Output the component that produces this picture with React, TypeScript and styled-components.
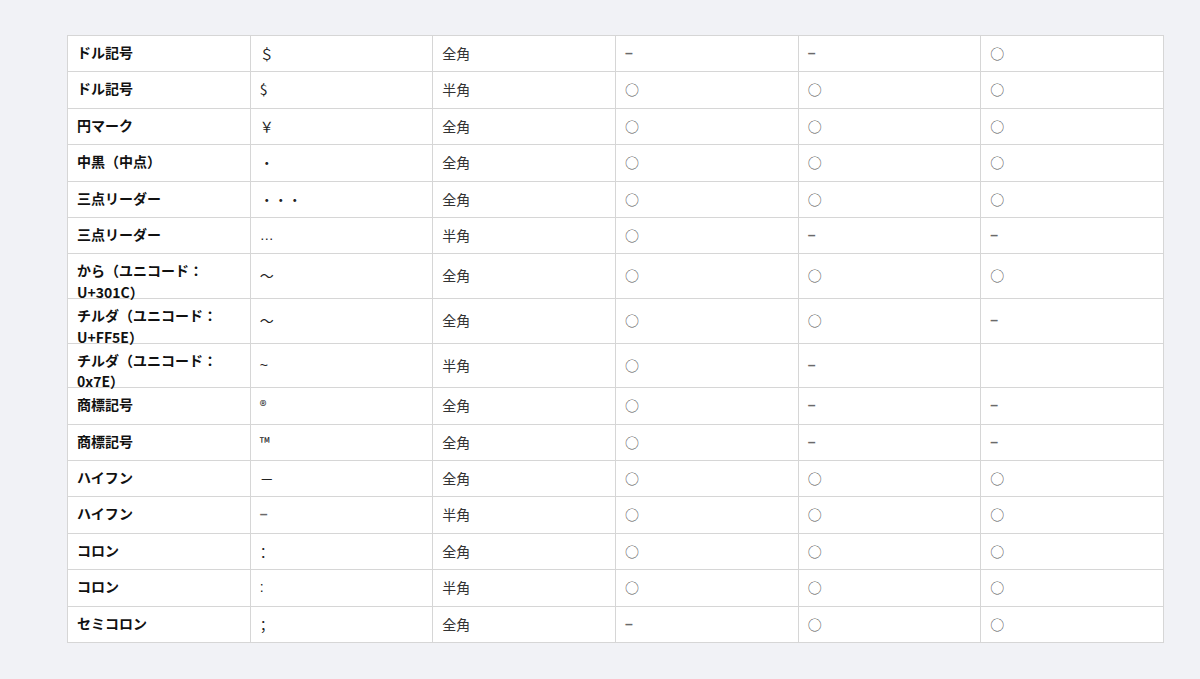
import React from "react";
import styled, { createGlobalStyle } from "styled-components";

const Global = createGlobalStyle`
  html, body { margin: 0; padding: 0; background: #f1f2f6; }
  body { font-family: "Noto Sans CJK JP", "Noto Sans", sans-serif; }
`;

const Page = styled.div`
  padding: 35px 36px 36px 67px;
`;

const Table = styled.div`
  width: 1097px;
  background: #ffffff;
  border-top: 1px solid #d6d6d6;
  border-left: 1px solid #d6d6d6;
  box-sizing: border-box;
`;

const Row = styled.div<{ $tall?: boolean }>`
  display: grid;
  grid-template-columns: repeat(6, minmax(0, 1fr));
  grid-template-rows: ${(p) => (p.$tall ? "44.67px" : "36.4px")};
  height: ${(p) => (p.$tall ? "44.67px" : "36.4px")};
  box-sizing: border-box;
`;

const Cell = styled.div<{ $head?: boolean }>`
  display: flex;
  align-items: ${(p) => (p.$head ? "flex-start" : "center")};
  padding: ${(p) => (p.$head ? "6px 10px 0 9px" : "0 10px 0 9px")};
  border-right: 1px solid #d6d6d6;
  border-bottom: 1px solid #d6d6d6;
  box-sizing: border-box;
  font-size: 14px;
  line-height: 21.5px;
  color: ${(p) => (p.$head ? "#111111" : "#333333")};
  font-weight: ${(p) => (p.$head ? 700 : 400)};
  min-width: 0;
  min-height: 0;
  overflow: visible;
  white-space: pre-wrap;
`;

const Glyph = styled.span<{ $latin?: boolean; $dash?: boolean }>`
  font-family: ${(p) =>
    p.$latin
      ? '"Liberation Sans", "Noto Sans", sans-serif'
      : '"Noto Sans CJK SC", "Noto Sans CJK JP", sans-serif'};
  font-weight: ${(p) => (p.$dash ? 700 : 400)};
  color: ${(p) => (p.$dash ? "#6a6a6a" : "#222222")};
`;

const Mark = styled.span<{ $kind: "circle" | "dash" }>`
  font-family: ${(p) =>
    p.$kind === "dash"
      ? '"Liberation Sans", "Noto Sans", sans-serif'
      : '"Noto Sans CJK JP", sans-serif'};
  font-weight: ${(p) => (p.$kind === "dash" ? 700 : 400)};
  color: ${(p) => (p.$kind === "dash" ? "#6a6a6a" : "#555555")};
  font-size: 14px;
`;

type R = { cells: string[]; tall?: boolean };

const latinGlyphs = new Set(["…", "~", "–", ":"]);

const rows: R[] = [
  { cells: ["ドル記号", "＄", "全角", "–", "–", "○"] },
  { cells: ["ドル記号", "$", "半角", "○", "○", "○"] },
  { cells: ["円マーク", "￥", "全角", "○", "○", "○"] },
  { cells: ["中黒（中点）", "・", "全角", "○", "○", "○"] },
  { cells: ["三点リーダー", "・・・", "全角", "○", "○", "○"] },
  { cells: ["三点リーダー", "…", "半角", "○", "–", "–"] },
  { cells: ["から（ユニコード：U+301C）", "〜", "全角", "○", "○", "○"], tall: true },
  { cells: ["チルダ（ユニコード：U+FF5E）", "～", "全角", "○", "○", "–"], tall: true },
  { cells: ["チルダ（ユニコード：0x7E）", "~", "半角", "○", "–", ""], tall: true },
  { cells: ["商標記号", "®", "全角", "○", "–", "–"] },
  { cells: ["商標記号", "™", "全角", "○", "–", "–"] },
  { cells: ["ハイフン", "－", "全角", "○", "○", "○"] },
  { cells: ["ハイフン", "–", "半角", "○", "○", "○"] },
  { cells: ["コロン", "：", "全角", "○", "○", "○"] },
  { cells: ["コロン", ":", "半角", "○", "○", "○"] },
  { cells: ["セミコロン", "；", "全角", "–", "○", "○"] },
];

export default function App() {
  return (
    <Page>
      <Global />
      <Table>
        {rows.map((r, i) => (
          <Row key={i} $tall={r.tall}>
            {r.cells.map((c, j) => (
              <Cell key={j} $head={j === 0}>
                {j === 1 ? (
                  <Glyph $latin={latinGlyphs.has(c)} $dash={c === "–"}>
                    {c}
                  </Glyph>
                ) : j >= 3 && c ? (
                  <Mark $kind={c === "○" ? "circle" : "dash"}>{c}</Mark>
                ) : (
                  c
                )}
              </Cell>
            ))}
          </Row>
        ))}
      </Table>
    </Page>
  );
}
